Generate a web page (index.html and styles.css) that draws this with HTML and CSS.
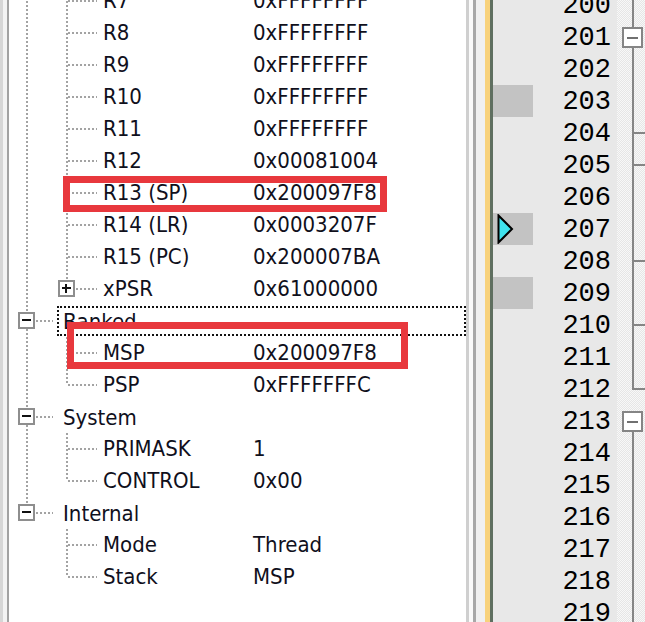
FILE: index.html
```html
<!DOCTYPE html>
<html>
<head>
<meta charset="utf-8">
<link rel="stylesheet" href="styles.css">
</head>
<body>
<div class="app">
  <div class="regs">
    <div class="edge"></div>
    <div class="tree">
      <div class="row"><span class="c1 v"></span><span class="c2 tee"></span><span class="name">R7</span><span class="val">0xFFFFFFFF</span></div>
      <div class="row"><span class="c1 v"></span><span class="c2 tee"></span><span class="name">R8</span><span class="val">0xFFFFFFFF</span></div>
      <div class="row"><span class="c1 v"></span><span class="c2 tee"></span><span class="name">R9</span><span class="val">0xFFFFFFFF</span></div>
      <div class="row"><span class="c1 v"></span><span class="c2 tee"></span><span class="name">R10</span><span class="val">0xFFFFFFFF</span></div>
      <div class="row"><span class="c1 v"></span><span class="c2 tee"></span><span class="name">R11</span><span class="val">0xFFFFFFFF</span></div>
      <div class="row"><span class="c1 v"></span><span class="c2 tee"></span><span class="name">R12</span><span class="val">0x00081004</span></div>
      <div class="row"><span class="c1 v"></span><span class="c2 tee"></span><span class="name">R13 (SP)</span><span class="val">0x200097F8</span></div>
      <div class="row"><span class="c1 v"></span><span class="c2 tee"></span><span class="name">R14 (LR)</span><span class="val">0x0003207F</span></div>
      <div class="row"><span class="c1 v"></span><span class="c2 tee"></span><span class="name">R15 (PC)</span><span class="val">0x200007BA</span></div>
      <div class="row"><span class="c1 v"></span><span class="c2 elbow"><span class="box plus"></span></span><span class="name">xPSR</span><span class="val">0x61000000</span></div>
      <div class="row"><span class="c0 gtee"><span class="box"></span></span><span class="label focus">Banked</span></div>
      <div class="row"><span class="c1 v"></span><span class="c2 tee"></span><span class="name">MSP</span><span class="val">0x200097F8</span></div>
      <div class="row"><span class="c1 v"></span><span class="c2 elbow"></span><span class="name">PSP</span><span class="val">0xFFFFFFFC</span></div>
      <div class="row"><span class="c0 gtee"><span class="box"></span></span><span class="label">System</span></div>
      <div class="row"><span class="c1 v"></span><span class="c2 tee"></span><span class="name">PRIMASK</span><span class="val">1</span></div>
      <div class="row"><span class="c1 v"></span><span class="c2 elbow"></span><span class="name">CONTROL</span><span class="val">0x00</span></div>
      <div class="row"><span class="c0 gelbow"><span class="box"></span></span><span class="label">Internal</span></div>
      <div class="row"><span class="c1"></span><span class="c2 tee"></span><span class="name">Mode</span><span class="val">Thread</span></div>
      <div class="row"><span class="c1"></span><span class="c2 elbow"></span><span class="name">Stack</span><span class="val">MSP</span></div>
    </div>
    <div class="mark mark-sp"></div>
    <div class="mark mark-msp"></div>
  </div>
  <div class="splitter"></div>
  <div class="editor">
    <div class="eline"><span class="gut"></span><span class="num">200</span><span class="fold fl"></span></div>
    <div class="eline"><span class="gut"></span><span class="num">201</span><span class="fold fl"><span class="fbox"></span></span></div>
    <div class="eline"><span class="gut"></span><span class="num">202</span><span class="fold fl"></span></div>
    <div class="eline"><span class="gut bp"></span><span class="num">203</span><span class="fold fl"></span></div>
    <div class="eline"><span class="gut"></span><span class="num">204</span><span class="fold ftee"></span></div>
    <div class="eline"><span class="gut"></span><span class="num">205</span><span class="fold ftee"></span></div>
    <div class="eline"><span class="gut"></span><span class="num">206</span><span class="fold fl"></span></div>
    <div class="eline"><span class="gut bp"><svg class="arrow" width="17" height="30" viewBox="0 0 17 30"><polygon points="1.5,1.5 15,15 1.5,28.5" fill="#3fe3ee" stroke="#000" stroke-width="2"/></svg></span><span class="num">207</span><span class="fold fl"></span></div>
    <div class="eline"><span class="gut"></span><span class="num">208</span><span class="fold ftee"></span></div>
    <div class="eline"><span class="gut bp"></span><span class="num">209</span><span class="fold fl"></span></div>
    <div class="eline"><span class="gut"></span><span class="num">210</span><span class="fold ftee"></span></div>
    <div class="eline"><span class="gut"></span><span class="num">211</span><span class="fold fl"></span></div>
    <div class="eline"><span class="gut"></span><span class="num">212</span><span class="fold fend"></span></div>
    <div class="eline"><span class="gut"></span><span class="num">213</span><span class="fold fbot"><span class="fbox"></span></span></div>
    <div class="eline"><span class="gut"></span><span class="num">214</span><span class="fold fl"></span></div>
    <div class="eline"><span class="gut"></span><span class="num">215</span><span class="fold fl"></span></div>
    <div class="eline"><span class="gut"></span><span class="num">216</span><span class="fold fl"></span></div>
    <div class="eline"><span class="gut"></span><span class="num">217</span><span class="fold fl"></span></div>
    <div class="eline"><span class="gut"></span><span class="num">218</span><span class="fold fl"></span></div>
    <div class="eline"><span class="gut"></span><span class="num">219</span><span class="fold fl"></span></div>
  </div>
</div>
</body>
</html>
```

FILE: styles.css
```css
html, body {
  margin: 0;
  padding: 0;
  background: #ffffff;
}

body {
  width: 645px;
  height: 622px;
  overflow: hidden;
}

.app {
  display: flex;
  width: 645px;
  height: 622px;
  overflow: hidden;
  --dot: #a3a3a3;
  --vdots: repeating-linear-gradient(to bottom, var(--dot) 0 2px, transparent 2px 4px);
  --hdots: repeating-linear-gradient(to right, var(--dot) 0 2px, transparent 2px 4px);
}

/* ---------- register tree ---------- */
.regs {
  position: relative;
  display: flex;
  width: 466px;
  flex: none;
  background: #ffffff;
  overflow: hidden;
}

.edge {
  width: 9px;
  flex: none;
  background: linear-gradient(to right,
    #d6d6d6 0 3px, #f3f3f3 3px 7px, #a2a2a2 7px 9px);
}

.tree {
  flex: 1;
  margin-top: -15px;
  font-family: "DejaVu Sans Condensed", "DejaVu Sans", sans-serif;
  font-stretch: condensed;
  font-size: 22px;
  color: #10101c;
}

.row {
  display: flex;
  height: 32px;
  line-height: 32px;
  white-space: nowrap;
}

.c1 {
  width: 40px;
  flex: none;
}

.c2 {
  width: 54px;
  flex: none;
}

.c0 {
  width: 48px;
  flex: none;
}

.name {
  width: 150px;
  flex: none;
}

.val {
  flex: 1;
}

.v {
  background: var(--vdots) 17px 0 / 2px 100% no-repeat;
}

.tee {
  background:
    var(--vdots) 17px 0 / 2px 100% no-repeat,
    var(--hdots) 19px 15px / 29px 2px no-repeat;
}

.elbow {
  background:
    var(--vdots) 17px 0 / 2px 16px no-repeat,
    var(--hdots) 19px 15px / 29px 2px no-repeat;
}

.gtee {
  background:
    var(--vdots) 17px 0 / 2px 100% no-repeat,
    var(--hdots) 19px 15px / 25px 2px no-repeat;
}

.gelbow {
  background:
    var(--vdots) 17px 0 / 2px 16px no-repeat,
    var(--hdots) 19px 15px / 25px 2px no-repeat;
}

.box {
  position: relative;
  display: block;
  box-sizing: border-box;
  width: 17px;
  height: 17px;
  margin: 7px 0 0 9px;
  border: 2px solid #8e8e8e;
  background: #ffffff;
}

.box::before {
  content: "";
  position: absolute;
  left: 2px;
  right: 2px;
  top: 5px;
  height: 2px;
  background: #111111;
}

.plus::after {
  content: "";
  position: absolute;
  top: 2px;
  bottom: 2px;
  left: 5px;
  width: 2px;
  background: #111111;
}

.label {
  box-sizing: border-box;
  flex: 1;
  height: 30px;
  margin-top: 1px;
  line-height: 28px;
  padding-left: 4px;
  border: 2px solid transparent;
}

.label.focus {
  border: 2px dotted #111111;
}

.mark {
  position: absolute;
  box-sizing: border-box;
  border: 7px solid #e8383d;
}

.mark-sp {
  left: 63px;
  top: 176px;
  width: 324px;
  height: 36px;
}

.mark-msp {
  left: 67px;
  top: 322px;
  width: 341px;
  height: 47px;
}

/* ---------- splitter ---------- */
.splitter {
  width: 27px;
  flex: none;
  background: linear-gradient(to right,
    #cfcfcf 0 3px,
    #fafafa 3px 7px,
    #a8a8a8 7px 10px,
    #f0f0f0 10px 19px,
    #f8d27c 19px 24px,
    #5f6f60 24px 27px);
}

/* ---------- editor margins ---------- */
.editor {
  flex: 1;
  margin-top: -11px;
  background: #e8e8e8;
  font-family: "Liberation Mono", "Courier New", monospace;
  font-size: 27px;
  color: #000000;
}

.eline {
  display: flex;
  height: 32px;
}

.gut {
  width: 40px;
  flex: none;
  position: relative;
}

.gut.bp {
  background: #c3c3c3;
}

.arrow {
  display: block;
  margin: 1px 0 0 4px;
}

.num {
  flex: 1;
  text-align: right;
  padding-right: 6px;
  line-height: 30px;
  padding-top: 2px;
}

.fold {
  width: 28px;
  flex: none;
  --checker: repeating-conic-gradient(#e6e6e6 0 25%, #f8f8f8 0 50%) 0 0 / 2px 2px;
  --vline: linear-gradient(#858585, #858585);
  background: var(--checker);
}

.fl {
  background: var(--vline) 15px 0 / 2px 100% no-repeat, var(--checker);
}

.ftee {
  background:
    var(--vline) 15px 0 / 2px 100% no-repeat,
    var(--vline) 17px 15px / 11px 2px no-repeat,
    var(--checker);
}

.fend {
  background:
    var(--vline) 15px 0 / 2px 17px no-repeat,
    var(--vline) 17px 15px / 11px 2px no-repeat,
    var(--checker);
}

.fbot {
  background: var(--vline) 15px 16px / 2px 16px no-repeat, var(--checker);
}

.fbox {
  position: relative;
  display: block;
  box-sizing: border-box;
  width: 21px;
  height: 21px;
  margin: 6px 0 0 5px;
  border: 2px solid #858585;
  background: #ffffff;
}

.fbox::before {
  content: "";
  position: absolute;
  left: 3px;
  right: 3px;
  top: 7.5px;
  height: 2px;
  background: #707070;
}
```
